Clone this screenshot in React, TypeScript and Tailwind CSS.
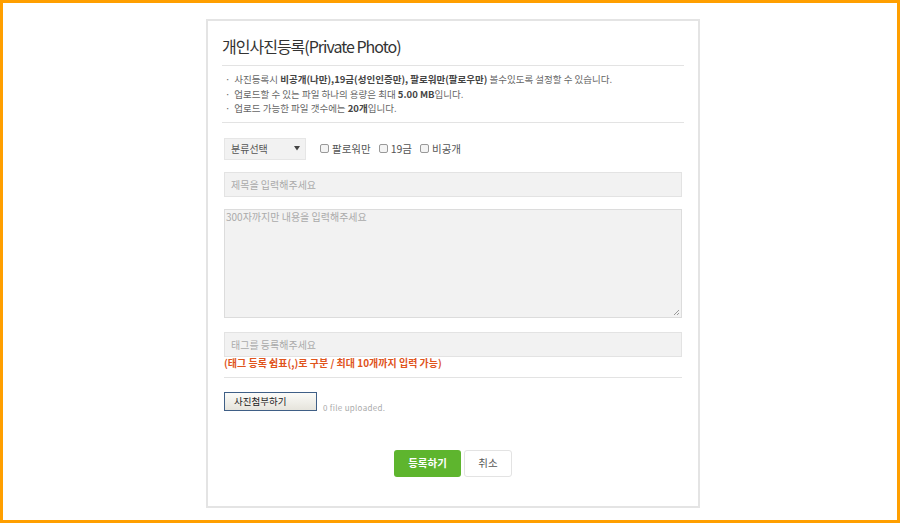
import React from "react";

const KR = { fontFamily: '"Noto Sans CJK KR", "Noto Sans", sans-serif' } as React.CSSProperties;

export default function App() {
  return (
    <div
      className="w-[900px] h-[523px] border-[3px] border-[#ff9f00] bg-white flex justify-center pt-[16px] pl-[6px]"
      style={KR}
    >
      <div className="w-[494px] h-[489px] border-2 border-[#e4e4e4] bg-white px-[14px] flex flex-col">
        <h1 className="text-[16px] leading-[20px] text-[#333] mt-[15px] tracking-[-1px]">
          개인사진등록(Private Photo)
        </h1>
        <div className="mt-[9px] h-px bg-[#e3e3e3]" />
        <ul className="mt-[6px] text-[9.5px] leading-[14.5px] text-[#666] tracking-[0px]">
          <li className="flex gap-[4px] pl-[3px]">
            <span>·</span>
            <span>
              사진등록시 <b className="text-[#444]">비공개(나만),19금(성인인증만), 팔로워만(팔로우만)</b> 볼수있도록 설정할 수 있습니다.
            </span>
          </li>
          <li className="flex gap-[4px] pl-[3px]">
            <span>·</span>
            <span>
              업로드할 수 있는 파일 하나의 용량은 최대 <b className="text-[#444]">5.00 MB</b>입니다.
            </span>
          </li>
          <li className="flex gap-[4px] pl-[3px]">
            <span>·</span>
            <span>
              업로드 가능한 파일 갯수에는 <b className="text-[#444]">20개</b>입니다.
            </span>
          </li>
        </ul>
        <div className="mt-[6px] h-px bg-[#e3e3e3]" />

        <div className="px-[2px] flex flex-col">
          <div className="mt-[15px] flex items-center">
            <div className="w-[82px] h-[22px] bg-[#f2f2f2] border border-[#e6e6e6] flex items-center justify-between pl-[6px] pr-[5px] text-[10px] text-[#555]">
              <span>분류선택</span>
              <svg width="6" height="5" viewBox="0 0 6 5">
                <path d="M0 0 H6 L3 4.5 Z" fill="#444" />
              </svg>
            </div>
            <div className="ml-[14px] flex items-center gap-[8px] text-[10.5px] text-[#555]">
              <label className="flex items-center gap-[3px]">
                <span className="w-[9px] h-[9px] border border-[#999] rounded-[2px] bg-[#f4f4f4]" />
                팔로워만
              </label>
              <label className="flex items-center gap-[3px]">
                <span className="w-[9px] h-[9px] border border-[#999] rounded-[2px] bg-[#f4f4f4]" />
                19금
              </label>
              <label className="flex items-center gap-[3px]">
                <span className="w-[9px] h-[9px] border border-[#999] rounded-[2px] bg-[#f4f4f4]" />
                비공개
              </label>
            </div>
          </div>

          <div className="mt-[12px] h-[25px] bg-[#f2f2f2] border border-[#e3e3e3] flex items-center px-[6px] text-[10px] text-[#aaa]">
            제목을 입력해주세요
          </div>

          <div className="relative mt-[12px] h-[109px] bg-[#f2f2f2] border border-[#dcdcdc] px-[1px] pt-[1px] text-[10px] leading-[12px] text-[#aaa]">
            300자까지만 내용을 입력해주세요
            <svg className="absolute right-[1px] bottom-[1px]" width="7" height="7" viewBox="0 0 7 7">
              <path d="M6 1 L1 6 M6 4 L4 6" stroke="#999" strokeWidth="1" />
            </svg>
          </div>

          <div className="mt-[14px] h-[25px] bg-[#f2f2f2] border border-[#e3e3e3] flex items-center px-[6px] text-[10px] text-[#aaa]">
            태그를 등록해주세요
          </div>
          <p className="mt-0 text-[10px] leading-[12px] font-bold text-[#e0541c]">
            (태그 등록 쉼표(,)로 구분 / 최대 10개까지 입력 가능)
          </p>
          <div className="mt-[8px] h-px bg-[#e3e3e3]" />

          <div className="mt-[14px] flex items-end">
            <div className="w-[93px] h-[19px] border border-[#3f5f86] bg-gradient-to-b from-[#fbfbf8] to-[#e6e4dc] flex items-center pl-[9px] text-[9.5px] text-[#222]">
              사진첨부하기
            </div>
            <span className="ml-[6px] mb-[-3px] text-[8px] text-[#aaa] tracking-[0.3px]">0 file uploaded.</span>
          </div>

          <div className="mt-[39px] flex justify-center gap-[3px]">
            <button className="w-[67px] h-[27px] rounded-[3px] bg-[#5eb52e] text-white text-[10.5px] font-bold">
              등록하기
            </button>
            <button className="w-[48px] h-[27px] rounded-[3px] bg-white border border-[#e3e3e3] text-[#555] text-[10.5px]">
              취소
            </button>
          </div>
        </div>
      </div>
    </div>
  );
}
